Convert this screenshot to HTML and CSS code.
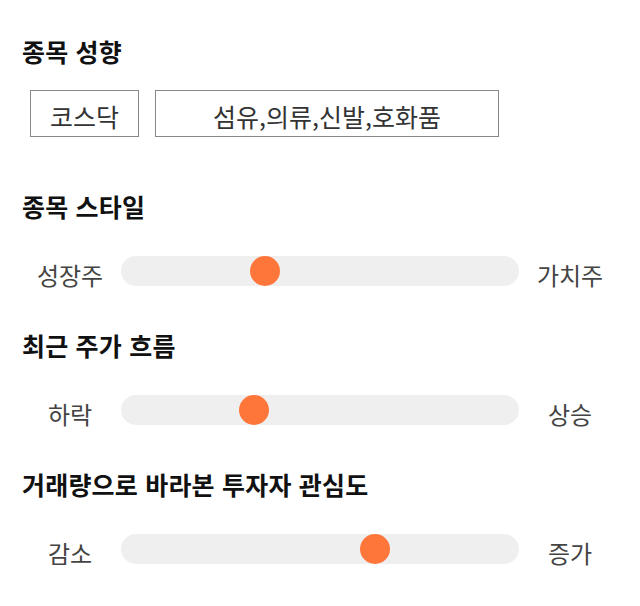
FILE: index.html
```html
<!DOCTYPE html>
<html lang="ko">
<head>
    <meta charset="UTF-8">
    <meta name="viewport" content="width=device-width, initial-scale=1.0">
    <title>종목 분석</title>
    <link rel="stylesheet" href="styles.css">
</head>
<body>
    <div class="panel">
        <section class="group group-tags">
            <h2 class="group-title">종목 성향</h2>
            <div class="tags">
                <div class="tag tag-market">코스닥</div>
                <div class="tag tag-sector">섬유,의류,신발,호화품</div>
            </div>
        </section>

        <section class="group">
            <h2 class="group-title">종목 스타일</h2>
            <div class="scale">
                <span class="scale-label">성장주</span>
                <input type="range" class="scale-range" min="0" max="100" value="35">
                <span class="scale-label">가치주</span>
            </div>
        </section>

        <section class="group">
            <h2 class="group-title">최근 주가 흐름</h2>
            <div class="scale">
                <span class="scale-label">하락</span>
                <input type="range" class="scale-range" min="0" max="100" value="32">
                <span class="scale-label">상승</span>
            </div>
        </section>

        <section class="group">
            <h2 class="group-title">거래량으로 바라본 투자자 관심도</h2>
            <div class="scale">
                <span class="scale-label">감소</span>
                <input type="range" class="scale-range" min="0" max="100" value="65">
                <span class="scale-label">증가</span>
            </div>
        </section>
    </div>
</body>
</html>
```

FILE: styles.css
```css
* {
    margin: 0;
    padding: 0;
    box-sizing: border-box;
}

body {
    font-family: "Noto Sans CJK KR", "Noto Sans", sans-serif;
    background: #fff;
    color: #333;
}

.panel {
    padding: 33px 22px 0;
}

.group {
    margin-bottom: 37px;
}

.group-tags {
    margin-bottom: 51px;
}

.group-title {
    font-size: 25px;
    line-height: 36px;
    font-weight: 700;
    color: #111;
    margin-bottom: 32px;
    letter-spacing: 0.2px;
}

.group-tags .group-title {
    margin-bottom: 21px;
}

.tags {
    display: flex;
    gap: 16px;
    margin-left: 8px;
}

.tag {
    border: 1px solid #888;
    height: 47px;
    padding-top: 6px;
    font-size: 25px;
    line-height: 39px;
    text-align: center;
    color: #333;
}

.tag-market {
    width: 109px;
}

.tag-sector {
    width: 344px;
}

.scale {
    display: grid;
    grid-template-columns: 96px 1fr 96px;
    column-gap: 3px;
    align-items: start;
}

.scale-label {
    font-size: 24px;
    line-height: 30px;
    padding-top: 4px;
    text-align: center;
    color: #444;
}

.scale-range {
    -webkit-appearance: none;
    appearance: none;
    width: 100%;
    height: 30px;
    margin: 0;
    border-radius: 15px;
    background: #efefef;
    outline: none;
}

.scale-range::-webkit-slider-thumb {
    -webkit-appearance: none;
    appearance: none;
    width: 30px;
    height: 30px;
    border: none;
    border-radius: 50%;
    background: #ff763b;
    cursor: pointer;
}
```
